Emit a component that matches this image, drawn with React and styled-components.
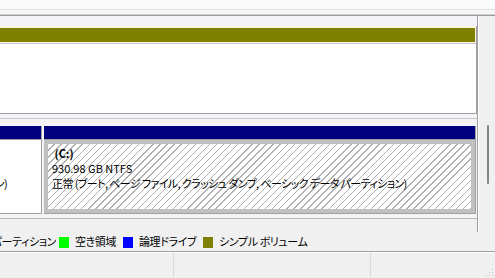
import styled, { createGlobalStyle } from 'styled-components'

const GlobalStyle = createGlobalStyle`
  html, body {
    margin: 0;
    padding: 0;
  }
  body {
    font-family: "Noto Sans CJK JP", "Noto Sans", sans-serif;
    font-size: 11px;
    color: #000;
    background: #f0f0f0;
    font-feature-settings: "palt";
  }
`

const legend = [
  { label: '空き領域', color: '#00ff00' },
  { label: '論理ドライブ', color: '#0000ff' },
  { label: 'シンプル ボリューム', color: '#808000' },
]

const App = () => {
  return (
    <Window>
      <GlobalStyle />
      <TopStrip>
        <PaneEdge />
      </TopStrip>
      <Main>
        <GraphArea>
          <DiskRow $top={10} $right={0}>
            <Partition $width={620}>
              <FramedHeader>
                <HeaderBar $color="#808000" />
              </FramedHeader>
              <Body />
            </Partition>
          </DiskRow>
          <DiskRow $top={7} $right={1} $line="#b8b8b8">
            <Partition $width={190}>
              <Header $color="#000080" />
              <Body>
                <Line>&nbsp;</Line>
                <Line>100 MB</Line>
                <Line $tight>正常 (EFI システム パーティション)</Line>
              </Body>
            </Partition>
            <Partition $width={432}>
              <Header $color="#000080" />
              <Body $hatched>
                <VolumeName>&nbsp;(C:)</VolumeName>
                <Line>930.98 GB NTFS</Line>
                <Line $tight>正常 (ブート, ページ ファイル, クラッシュ ダンプ, ベーシック データ パーティション)</Line>
              </Body>
            </Partition>
          </DiskRow>
          <Filler />
        </GraphArea>
        <Scrollbar>
          <Thumb $offset={109} $length={59} />
        </Scrollbar>
      </Main>
      <Legend>
        <ClippedLabel>
          <LegendText>拡張パーティション</LegendText>
        </ClippedLabel>
        {legend.map((item) => (
          <LegendItem key={item.label}>
            <Swatch $color={item.color} />
            <LegendText>{item.label}</LegendText>
          </LegendItem>
        ))}
      </Legend>
      <StatusBar>
        <StatusPane $width={174} />
        <StatusPane $width={197} />
        <StatusPane $last>
          <Grip width="8" height="8" viewBox="0 0 8 8">
            <rect x="6" y="0" width="1" height="1" fill="#c4c4c4" />
            <rect x="3" y="3" width="1" height="1" fill="#c4c4c4" />
            <rect x="6" y="3" width="1" height="1" fill="#c4c4c4" />
            <rect x="0" y="6" width="1" height="1" fill="#c4c4c4" />
            <rect x="3" y="6" width="1" height="1" fill="#c4c4c4" />
            <rect x="6" y="6" width="1" height="1" fill="#c4c4c4" />
          </Grip>
        </StatusPane>
      </StatusBar>
    </Window>
  )
}

const Window = styled.div`
  width: 495px;
  height: 278px;
  display: flex;
  flex-direction: column;
  overflow: hidden;
  background: #f0f0f0;
`
const TopStrip = styled.div`
  box-sizing: border-box;
  flex: 0 0 16px;
  background: #f6f6f6;
  border-bottom: 1px solid #9c9c9c;
  box-shadow: inset 0 -1px #cfcfcf;
`
const PaneEdge = styled.div`
  height: 9px;
  background: #fbfbfb;
  border-bottom: 1px solid #e4e4e4;
`
const Main = styled.div`
  flex: 0 0 216px;
  display: flex;
`
const GraphArea = styled.div`
  box-sizing: border-box;
  flex: 0 0 478px;
  display: flex;
  flex-direction: column;
  overflow: hidden;
  background: #f3f3f8;
  border-right: 1px solid #a0a0a0;
`
const DiskRow = styled.div`
  display: flex;
  justify-content: flex-end;
  gap: 2px;
  padding: ${(p) => p.$top}px ${(p) => p.$right}px 4px 0;
  border-bottom: 1px solid ${(p) => p.$line || '#c8c8c8'};
`
const Partition = styled.div`
  box-sizing: border-box;
  flex: 0 0 ${(p) => p.$width}px;
  min-width: 0;
  height: 88px;
  display: flex;
  flex-direction: column;
  background: #fff;
  border-right: 1px solid #a0a0a0;
  border-bottom: 1px solid #a0a0a0;
`
const FramedHeader = styled.div`
  padding: 2px 1px 1px 0;
  background: #fdf6e1;
  border-bottom: 1px solid #c4c2d6;
`
const HeaderBar = styled.div`
  height: 14px;
  background: ${(p) => p.$color};
`
const Header = styled.div`
  flex: 0 0 13px;
  background: ${(p) => p.$color};
  border-bottom: 1px solid #a0a0a0;
`
const Body = styled.div`
  flex: 1;
  min-height: 0;
  min-width: 0;
  overflow: hidden;
  white-space: nowrap;
  padding: ${(p) => (p.$hatched ? '2px 4px' : '6px 8px')};
  border: ${(p) => (p.$hatched ? '4px solid #c0c0c0' : 'none')};
  background: ${(p) =>
    p.$hatched
      ? 'repeating-linear-gradient(135deg, #ffffff 0 4px, #b0b0b0 4px 5px)'
      : '#fff'};
`
const Line = styled.div`
  height: 15px;
  line-height: 15px;
  letter-spacing: ${(p) => (p.$tight ? '-0.6px' : '0')};
`
const VolumeName = styled(Line)`
  font-weight: 700;
`
const Filler = styled.div`
  flex: 1;
  background: #f0f0f0;
`
const Scrollbar = styled.div`
  flex: 1;
  display: flex;
  align-items: flex-start;
  background: #f0f0f0;
  border-left: 1px solid #fff;
`
const Thumb = styled.div`
  width: 2px;
  height: ${(p) => p.$length}px;
  margin: ${(p) => p.$offset}px 0 0 8px;
  border-radius: 1px;
  background: #858585;
`
const Legend = styled.div`
  flex: 0 0 19px;
  display: flex;
  align-items: center;
  gap: 7px;
  background: #f0f0f0;
  border-bottom: 1px solid #a0a0a0;
`
const ClippedLabel = styled.div`
  flex: 0 0 56px;
  margin-right: -4px;
  display: flex;
  justify-content: flex-end;
  overflow: hidden;
`
const LegendItem = styled.div`
  display: flex;
  align-items: center;
  gap: 6px;
`
const Swatch = styled.span`
  flex: 0 0 10px;
  height: 11px;
  margin-top: 2px;
  background: ${(p) => p.$color};
`
const LegendText = styled.span`
  flex: none;
  line-height: 19px;
  white-space: nowrap;
  letter-spacing: -0.4px;
`
const StatusBar = styled.div`
  flex: 1;
  display: flex;
  background: #f0f0f0;
  border-top: 1px solid #fbfbfb;
`
const StatusPane = styled.div`
  box-sizing: border-box;
  flex: ${(p) => (p.$last ? '1' : `0 0 ${p.$width}px`)};
  display: flex;
  justify-content: flex-end;
  align-items: flex-end;
  border-right: ${(p) => (p.$last ? 'none' : '1px solid #d9d9d9')};
`
const Grip = styled.svg`
  display: block;
  margin: 0 1px 1px 0;
`

export default App
